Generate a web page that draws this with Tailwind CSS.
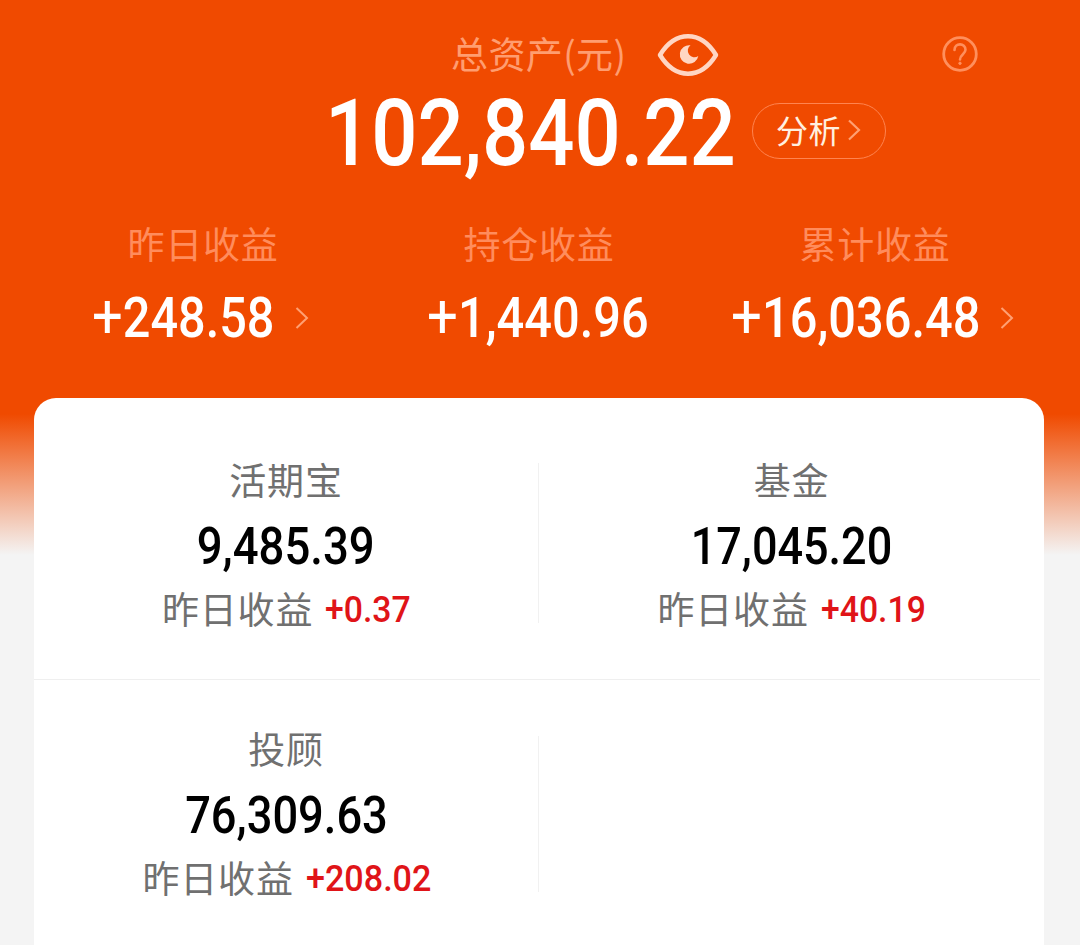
<!DOCTYPE html>
<html lang="zh-CN">
<head>
  <meta charset="UTF-8" />
  <meta name="viewport" content="width=device-width, initial-scale=1.0" />
  <title>总资产</title>
  <script src="https://cdn.jsdelivr.net/npm/@tailwindcss/browser@4"></script>
</head>
<body class="h-[945px] overflow-hidden bg-[#f4f4f4] font-['Noto_Sans_CJK_SC',sans-serif]">

  <div class="h-[945px] bg-linear-to-b/srgb from-[#f04a00] from-[414px] to-[#f4f4f4] to-[555px]">

    <!-- Total assets -->
    <header class="h-[398px] pt-[22px]">
      <div class="flex h-[62px] items-center pl-[451px] pr-[102px]">
        <span class="mt-px w-[206px] whitespace-nowrap text-[37px] leading-none tracking-[0.4px] text-[#ff9d70]">总资产(元)</span>
        <svg class="mt-1 h-11 w-[62px]" viewBox="0 0 62 44" fill="none">
          <path d="M3 22C11 9 20 3.300 31 3.300S51 9 59 22C51 35 42 40.700 31 40.700S11 35 3 22Z" stroke="#ffd6c3" stroke-width="4.500" stroke-linejoin="round" />
          <path d="M33.500 12.300A9.300 9.300 0 1 0 41.300 23A6.300 6.300 0 0 1 33.500 12.300Z" fill="#ffd6c3" />
        </svg>
        <svg class="ml-auto mt-0.5 h-9 w-9" viewBox="0 0 36 36" fill="none" stroke="#ff8f5c">
          <circle cx="18" cy="18" r="16.300" stroke-width="2.800" />
          <path d="M12.500 14C12.500 6.500 23.500 6.500 23.500 13.800C23.500 18 18 18.500 18 23.500" stroke-width="2.600" stroke-linecap="round" />
          <circle cx="18" cy="27.300" r="1.200" fill="#ff8f5c" />
        </svg>
      </div>

      <div class="flex h-[100px] items-center pl-[325px]">
        <div class="-mt-0.5 w-[427px] whitespace-nowrap">
          <span class="inline-block origin-left scale-x-[0.875] font-['Roboto',sans-serif] text-[93px] font-medium leading-none text-white">102,840.22</span>
        </div>
        <button class="mb-1.5 flex h-14 w-[134px] items-center rounded-full border-[1.5px] border-[#ff8450] pl-[23px]">
          <span class="-mt-1 text-[32px] leading-none tracking-[0.5px] text-[#fff0e0]">分析</span>
          <svg class="-mt-0.5 ml-1.5 h-[22px] w-[14px]" viewBox="0 0 14 22" fill="none" stroke="#ffa073" stroke-width="2.200"><path d="M2 1.500L12 11L2 20.500" /></svg>
        </button>
      </div>

      <!-- Earnings summary -->
      <div class="mt-8 grid grid-cols-3 pl-[35px] pr-[37px] text-[37px] text-[#ff8c5c]">
        <div class="flex flex-col items-center">
          <div class="flex h-[54px] items-center leading-none tracking-[0.8px]">昨日收益</div>
          <div class="flex h-24 w-[222px] items-center">
            <div class="mt-1 w-[203px] shrink-0 whitespace-nowrap"><span class="inline-block origin-left scale-x-[0.876] font-['Roboto',sans-serif] text-[55.500px] font-medium leading-none text-white"><span class="text-[62px] leading-[0] font-normal">+</span>248.58</span></div>
            <svg class="h-6 w-[14px] shrink-0" viewBox="0 0 14 24" fill="none" stroke="#ffa073" stroke-width="2"><path d="M1.500 2L12 12L1.500 22" /></svg>
          </div>
        </div>
        <div class="flex flex-col items-center">
          <div class="flex h-[54px] items-center leading-none tracking-[0.8px]">持仓收益</div>
          <div class="flex h-24 w-[224px] items-center">
            <div class="mt-1 shrink-0 whitespace-nowrap"><span class="inline-block origin-left scale-x-[0.879] font-['Roboto',sans-serif] text-[55.500px] font-medium leading-none text-white"><span class="text-[62px] leading-[0] font-normal">+</span>1,440.96</span></div>
          </div>
        </div>
        <div class="flex flex-col items-center">
          <div class="flex h-[54px] items-center leading-none tracking-[0.8px]">累计收益</div>
          <div class="flex h-24 w-[288px] items-center">
            <div class="mt-1 w-[269px] shrink-0 whitespace-nowrap"><span class="inline-block origin-left scale-x-[0.879] font-['Roboto',sans-serif] text-[55.500px] font-medium leading-none text-white"><span class="text-[62px] leading-[0] font-normal">+</span>16,036.48</span></div>
            <svg class="h-6 w-[14px] shrink-0" viewBox="0 0 14 24" fill="none" stroke="#ffa073" stroke-width="2"><path d="M1.500 2L12 12L1.500 22" /></svg>
          </div>
        </div>
      </div>
    </header>

    <!-- Accounts -->
    <main class="ml-[34px] h-[547px] w-[1010px] rounded-t-[22px] bg-white text-[37px] text-[#707070]">
      <div class="flex h-[281px]">
        <section class="flex w-[504px] flex-col items-center pt-[51px]">
          <h2 class="flex h-[60px] items-center leading-none tracking-[0.8px]">活期宝</h2>
          <div class="flex h-[76px] items-center"><span class="scale-x-[0.875] font-['Roboto',sans-serif] text-[52px] font-medium leading-none text-black">9,485.39</span></div>
          <div class="flex h-[50px] w-[248px] items-center whitespace-nowrap">
            <span class="-mt-1 w-[163px] shrink-0 leading-none tracking-[0.8px]">昨日收益</span>
            <span class="origin-left scale-x-[0.925] font-['Roboto',sans-serif] text-[36.500px] font-medium leading-none text-[#e01418]">+0.37</span>
          </div>
        </section>
        <div class="mt-[65px] h-40 w-px bg-[#f1f1f1]"></div>
        <section class="flex w-[505px] flex-col items-center pt-[51px]">
          <h2 class="flex h-[60px] items-center leading-none tracking-[0.8px]">基金</h2>
          <div class="flex h-[76px] items-center"><span class="scale-x-[0.865] font-['Roboto',sans-serif] text-[52px] font-medium leading-none text-black">17,045.20</span></div>
          <div class="flex h-[50px] w-[268px] items-center whitespace-nowrap">
            <span class="-mt-1 w-[163px] shrink-0 leading-none tracking-[0.8px]">昨日收益</span>
            <span class="origin-left scale-x-[0.925] font-['Roboto',sans-serif] text-[36.500px] font-medium leading-none text-[#e01418]">+40.19</span>
          </div>
        </section>
      </div>
      <div class="h-px w-[1006px] bg-[#efefef]"></div>
      <div class="flex">
        <section class="flex w-[504px] flex-col items-center pt-[38px]">
          <h2 class="flex h-[60px] items-center leading-none tracking-[0.8px]">投顾</h2>
          <div class="flex h-[76px] items-center"><span class="scale-x-[0.87] font-['Roboto',sans-serif] text-[52px] font-medium leading-none text-black">76,309.63</span></div>
          <div class="flex h-[50px] w-[287px] items-center whitespace-nowrap">
            <span class="-mt-1 w-[163px] shrink-0 leading-none tracking-[0.8px]">昨日收益</span>
            <span class="origin-left scale-x-[0.935] font-['Roboto',sans-serif] text-[36.500px] font-medium leading-none text-[#e01418]">+208.02</span>
          </div>
        </section>
        <div class="mt-14 h-[156px] w-px bg-[#f1f1f1]"></div>
      </div>
    </main>
  </div>

</body>
</html>
